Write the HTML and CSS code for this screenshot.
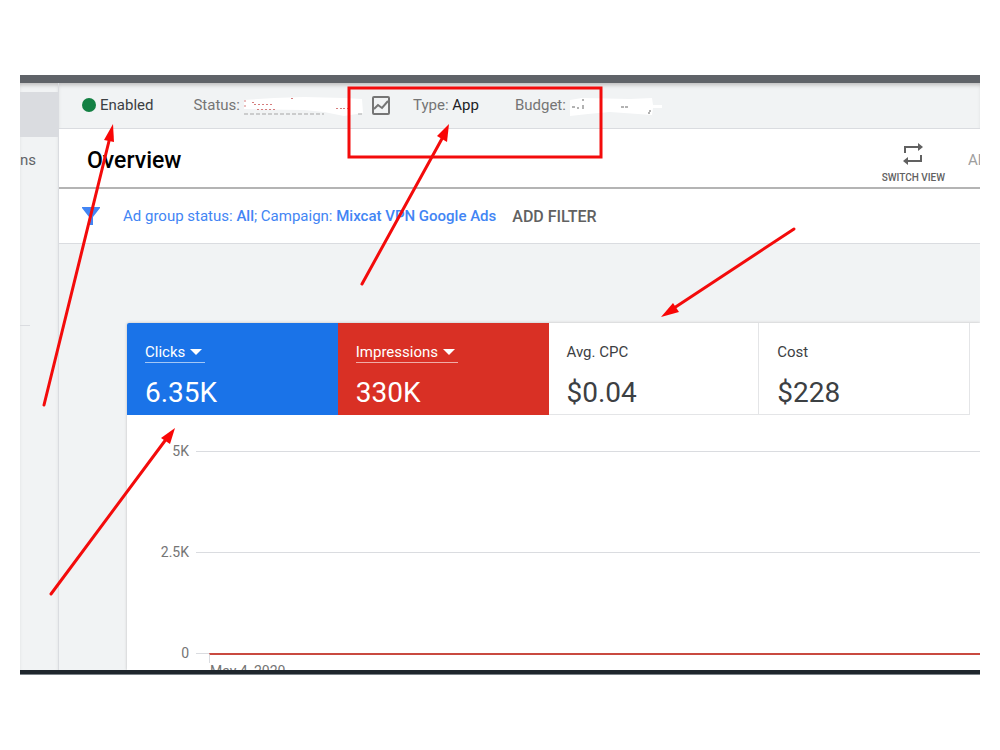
FILE: index.html
```html
<!DOCTYPE html>
<html lang="en">
<head>
    <meta charset="utf-8">
    <title>Overview</title>
    <link rel="stylesheet" href="styles.css">
</head>
<body>
    <div class="frame">
        <div class="topbar"></div>

        <div class="layout">
            <!-- Side menu -->
            <nav class="sidebar">
                <div class="sidebar-active"></div>
                <a class="sidebar-link" href="#">ns</a>
                <hr class="sidebar-line">
            </nav>

            <main class="main">
                <!-- Campaign status -->
                <div class="status-bar">
                    <div class="enabled"><span class="dot"></span>Enabled</div>
                    <div class="status">
                        <span>Status:</span>
                        <svg class="erased" width="120" height="24" viewBox="0 0 120 24">
                            <path d="M0 7L30 5L60 4L100 5L118 6L119 20L100 23L80 19L60 17L0 16Z" fill="#fff"/>
                            <path d="M0 21H80" stroke="#a5a5a5" stroke-dasharray="4 2"/>
                            <path d="M114 21h4" stroke="#aaa"/>
                            <path d="M1 7v2M1 12v2M8 9.500h2M10 11.500h19M13 16.500h20M47 5.500h3M92 15.500h6M99 15.500h8" stroke="#d67c7c" stroke-dasharray="2 2"/>
                        </svg>
                    </div>
                    <svg class="app-icon" width="20" height="20" viewBox="0 0 20 20" fill="none" stroke="#757575" stroke-width="2">
                        <rect x="2" y="2" width="16" height="17" rx="1"/>
                        <path d="M3 14L7 10L11 13L17 6"/>
                    </svg>
                    <div class="type">Type: <b>App</b></div>
                    <div class="budget">
                        <span>Budget:</span>
                        <svg class="erased" width="92" height="24" viewBox="0 0 92 24">
                            <path d="M0 7L12 5L60 6L82 5L83 12L92 12V15L83 15L82 22L40 19L18 21L0 23Z" fill="#fff"/>
                            <path d="M2 14h3M7 15h2M13 6v2M13 12v4M51 14h3M55 14h3M80 17v2M78 20h2" stroke="#666"/>
                        </svg>
                    </div>
                </div>

                <!-- Page title -->
                <div class="title-bar">
                    <h1>Overview</h1>
                    <button class="switch-view" type="button">
                        <svg width="22" height="24" viewBox="0 0 22 24">
                            <path d="M3 11V5H17M19 13V19H5" fill="none" stroke="#616161" stroke-width="2"/>
                            <path d="M16 1L21 5L16 9ZM6 15L1 19L6 23Z" fill="#616161"/>
                        </svg>
                        SWITCH VIEW
                    </button>
                    <span class="range">All</span>
                </div>

                <!-- Filters -->
                <div class="filter-bar">
                    <svg width="18" height="18" viewBox="0 0 18 18"><path d="M0 0H18V1L11 10V18H7V10L0 1Z" fill="#4285f4"/></svg>
                    <a class="filter-text" href="#">Ad group status: <b>All</b>; Campaign: <b>Mixcat VPN Google Ads</b></a>
                    <button class="add-filter" type="button">ADD FILTER</button>
                </div>

                <!-- Metrics and chart -->
                <section class="card">
                    <div class="metrics">
                        <div class="metric blue">
                            <button class="metric-name" type="button">Clicks <span class="caret"></span></button>
                            <div class="metric-value">6.35K</div>
                        </div>
                        <div class="metric red">
                            <button class="metric-name" type="button">Impressions <span class="caret"></span></button>
                            <div class="metric-value">330K</div>
                        </div>
                        <div class="metric">
                            <div class="metric-name">Avg. CPC</div>
                            <div class="metric-value">$0.04</div>
                        </div>
                        <div class="metric">
                            <div class="metric-name">Cost</div>
                            <div class="metric-value">$228</div>
                        </div>
                    </div>
                    <div class="chart">
                        <div class="chart-row"><span>5K</span><div class="grid-line"></div></div>
                        <div class="chart-row"><span>2.5K</span><div class="grid-line"></div></div>
                        <div class="chart-row"><span>0</span><div class="grid-line zero"></div></div>
                        <div class="chart-date">May 4, 2020</div>
                    </div>
                </section>
            </main>
        </div>

        <div class="bottombar"></div>

        <!-- Arrows and box drawn over the page -->
        <svg class="notes" width="960" height="600" viewBox="0 0 960 600">
            <g fill="none" stroke="#f30b0b" stroke-width="3" stroke-linecap="round">
                <rect x="329" y="13" width="252" height="69"/>
                <path d="M24 330L90 62M342 209L424 60M774 154L651 235M31 519L147 363"/>
            </g>
            <g fill="#f90606">
                <path d="M93 49L94 67L84 65Z"/>
                <path d="M429 49L427 67L417 61Z"/>
                <path d="M641 242L653 228L659 237Z"/>
                <path d="M155 353L150 369L141 363Z"/>
            </g>
        </svg>
    </div>
</body>
</html>
```
FILE: styles.css
```css
* {
    box-sizing: border-box;
}

body {
    margin: 0;
    padding: 75px 20px;
    background: #fff;
    font-family: Roboto, sans-serif;
    font-size: 15px;
    color: #3c4043;
}

button {
    padding: 0;
    border: none;
    background: none;
    font: inherit;
    color: inherit;
    cursor: pointer;
}

a {
    text-decoration: none;
}

.frame {
    position: relative;
    overflow: hidden;
}

.topbar {
    height: 8px;
    background: #5f6368;
}

.bottombar {
    height: 5px;
    background: #1f262d;
    border-bottom: 1px solid #7c8389;
}

.layout {
    display: flex;
    background: #f1f3f4;
}

/* Side menu */
.sidebar {
    flex: none;
    width: 39px;
    border-right: 1px solid #dadce0;
    padding-top: 9px;
    box-shadow: inset 0 4px 4px -2px #bbb;
}

.sidebar-active {
    height: 45px;
    background: #dadce0;
}

.sidebar-link {
    display: block;
    line-height: 20px;
    margin-top: 13px;
    color: #5f6368;
}

.sidebar-line {
    width: 10px;
    margin: 155px 0 0;
    border: none;
    border-top: 1px solid #dadce0;
}

.main {
    flex: 1;
    min-width: 0;
    overflow: hidden;
}

/* Campaign status */
.status-bar {
    display: flex;
    align-items: center;
    height: 46px;
    padding-left: 23px;
    padding-bottom: 1px;
    border-bottom: 1px solid #dadce0;
    box-shadow: inset 0 4px 4px -2px #bbb;
    color: #757575;
}

.status-bar b {
    font-weight: 400;
    color: #202124;
}

.enabled {
    display: flex;
    align-items: center;
    gap: 4px;
    color: #3c4043;
}

.dot {
    width: 14px;
    height: 14px;
    border-radius: 50%;
    background: #138043;
}

.status,
.budget {
    display: flex;
    align-items: center;
    gap: 4px;
}

.status {
    margin-left: 40px;
}

.app-icon {
    margin-left: 7px;
}

.type {
    margin-left: 22px;
}

.budget {
    margin-left: 36px;
}

/* Page title */
.title-bar {
    display: flex;
    align-items: center;
    height: 60px;
    padding: 4px 0 0 28px;
    overflow: hidden;
    background: #fff;
    border-bottom: 2px solid #b4b4b4;
}

.title-bar h1 {
    flex: 1;
    margin: 0;
    font-size: 23px;
    font-weight: 500;
    color: #000;
}

.switch-view {
    display: flex;
    flex-direction: column;
    align-items: center;
    gap: 6px;
    padding-top: 4px;
    font-size: 10px;
    font-weight: 500;
    color: #616161;
}

.range {
    width: 12px;
    margin-left: 23px;
    overflow: hidden;
    color: #9e9e9e;
}

/* Filters */
.filter-bar {
    display: flex;
    align-items: center;
    height: 55px;
    padding-left: 23px;
    background: #fff;
    border-bottom: 1px solid #dadce0;
}

.filter-text {
    margin-left: 23px;
    color: #4285f4;
}

.filter-text b {
    font-weight: 500;
}

.add-filter {
    margin-left: 16px;
    font-size: 16px;
    font-weight: 500;
    color: #616161;
}

/* Metrics and chart */
.card {
    margin: 79px 0 0 68px;
    background: #fff;
    border-top-left-radius: 2px;
    box-shadow: 0 0 3px #bbb;
}

.metrics {
    display: grid;
    grid-template-columns: repeat(4, 1fr);
    margin-right: 10px;
}

.metric {
    height: 92px;
    padding: 18px 18px 0;
    border-right: 1px solid #e4e5e7;
    border-bottom: 1px solid #e4e5e7;
}

.metric.blue {
    background: #1a73e8;
    border: none;
    border-top-left-radius: 2px;
    color: #fff;
}

.metric.red {
    background: #d93025;
    border: none;
    color: #fff;
}

.metric-name {
    display: block;
    height: 22px;
    line-height: 22px;
}

button.metric-name {
    border-bottom: 1px solid #fff9;
}

.caret {
    display: inline-block;
    margin: 0 3px 0 1px;
    vertical-align: 2px;
    border: 6px solid transparent;
    border-top-color: #fff;
    border-bottom: none;
}

.metric-value {
    margin-top: 14px;
    font-size: 28px;
    line-height: 32px;
}

.chart {
    padding-top: 26px;
    font-size: 14px;
    color: #757575;
}

.chart-row {
    display: flex;
    align-items: center;
    gap: 7px;
    height: 20px;
    margin-bottom: 81px;
}

.chart-row:nth-child(3) {
    margin-bottom: 0;
}

.chart-row span {
    width: 62px;
    text-align: right;
}

.grid-line {
    flex: 1;
    height: 1px;
    background: #dadce0;
}

/* Both series lie flat on the zero line */
.grid-line.zero::after {
    content: "";
    display: block;
    height: 8px;
    margin-left: 13px;
    border-top: 2px solid #c94a40;
    border-left: 1px solid #dadce0;
}

.chart-date {
    height: 7px;
    padding-left: 83px;
    overflow: hidden;
    line-height: 16px;
}

.notes {
    position: absolute;
    top: 0;
    left: 0;
}
```
